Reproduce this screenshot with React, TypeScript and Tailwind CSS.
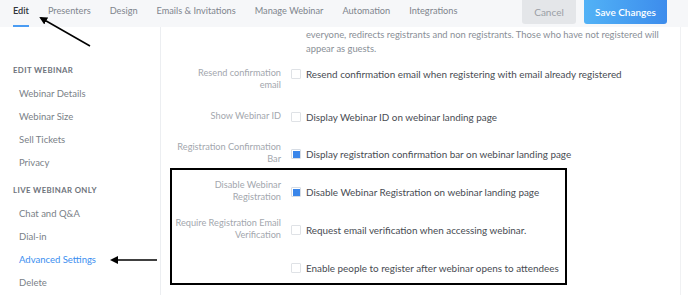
import React from 'react';

const tabs = ['Edit', 'Presenters', 'Design', 'Emails & Invitations', 'Manage Webinar', 'Automation', 'Integrations'];

function Checkbox({ checked }: { checked?: boolean }) {
  if (checked) {
    return (
      <span className="flex h-[10px] w-[10px] shrink-0 items-center justify-center rounded-[1px] border border-[#d6dce4] bg-white">
        <span className="h-[7px] w-[7px] bg-[#3a86ea]" />
      </span>
    );
  }
  return <span className="h-[10px] w-[10px] shrink-0 rounded-[1px] border border-[#dfe2e6] bg-white" />;
}

function Row({
  label,
  text,
  checked,
  dy = 0,
  labelWidth = 111,
  className = '',
}: {
  label?: string[];
  text: string;
  checked?: boolean;
  dy?: number;
  labelWidth?: number;
  className?: string;
}) {
  return (
    <div className={`flex items-start ${className}`}>
      <div
        className="shrink-0 text-right text-[9.2px] leading-[11.5px] text-[#a3a7ae]"
        style={{ width: labelWidth }}
      >
        {label?.map((l) => (
          <div key={l} className="whitespace-nowrap">{l}</div>
        ))}
      </div>
      <div className="ml-[10px] flex h-[14px] items-center gap-[5px]" style={{ marginTop: dy }}>
        <Checkbox checked={checked} />
        <span className="whitespace-nowrap text-[9.9px] leading-[14px] text-[#474b52]">{text}</span>
      </div>
    </div>
  );
}

function SideItem({ children, active }: { children: React.ReactNode; active?: boolean }) {
  return (
    <div className={`h-[23px] pl-[19px] text-[9.5px] leading-[23px] ${active ? 'text-[#3a8ef0]' : 'text-[#7a7f87]'}`}>
      {children}
    </div>
  );
}

export default function App() {
  return (
    <div className="relative h-[295px] w-[688px] overflow-hidden bg-white" style={{ fontFamily: 'Lato, "Noto Sans", sans-serif' }}>
      {/* top bar */}
      <div className="relative z-10 flex h-[27px] items-start bg-[#f6f7f9]">
        <div className="flex gap-[19px] pl-[13px]">
          {tabs.map((t, i) => (
            <div key={t} className="relative h-[27px]">
              <span className={`block whitespace-nowrap pt-[4px] text-[9.2px] leading-[14px] ${i === 0 ? 'font-semibold text-[#30343a]' : 'text-[#80858d]'}`}>
                {t}
              </span>
              {i === 0 && <span className="absolute bottom-0 left-0 h-[2px] w-full bg-[#4a9cf3]" />}
            </div>
          ))}
        </div>
        <div className="ml-auto mr-[21px] flex gap-[8px]">
          <button className="-mt-[6px] h-[30px] w-[54px] rounded-[3px] bg-[#e4e6e9] pt-[6px] text-[10px] text-[#9a9ea5]">
            Cancel
          </button>
          <button className="-mt-[6px] h-[30px] w-[83px] rounded-[3px] bg-gradient-to-r from-[#52b2f6] to-[#3d8cec] pt-[6px] text-[10px] font-semibold text-white">
            Save Changes
          </button>
        </div>
      </div>

      <div className="flex h-[268px]">
        {/* sidebar */}
        <div className="w-[161px] shrink-0 border-r border-[#eceef1]">
          <div className="pl-[13px] pt-[38px] text-[7.8px] font-bold leading-[10px] tracking-[0.05em] text-[#6e737b]">EDIT WEBINAR</div>
          <div className="mt-[7px]">
            <SideItem>Webinar Details</SideItem>
            <SideItem>Webinar Size</SideItem>
            <SideItem>Sell Tickets</SideItem>
            <SideItem>Privacy</SideItem>
          </div>
          <div className="mt-[11px] pl-[13px] text-[7.8px] font-bold leading-[10px] tracking-[0.05em] text-[#6e737b]">LIVE WEBINAR ONLY</div>
          <div className="mt-[7px]">
            <SideItem>Chat and Q&amp;A</SideItem>
            <SideItem>Dial-in</SideItem>
            <SideItem active>Advanced Settings</SideItem>
            <SideItem>Delete</SideItem>
          </div>
        </div>

        {/* content */}
        <div className="w-[520px] shrink-0 border-r border-[#f0f1f3] pl-[9px]">
          <div className="whitespace-nowrap pl-[136px] pt-[1px] text-[9.4px] leading-[14px] text-[#8a8f97]">
            everyone, redirects registrants and non registrants. Those who have not registered will
            <br />
            appear as guests.
          </div>

          <Row className="mt-[11px]" label={['Resend confirmation', 'email']} text="Resend confirmation email when registering with email already registered" />
          <Row className="mt-[20px]" label={['Show Webinar ID']} text="Display Webinar ID on webinar landing page" />
          <Row className="mt-[17px]" label={['Registration Confirmation', 'Bar']} text="Display registration confirmation bar on webinar landing page" checked dy={6} />

          <div className="mt-[4px] w-[397px] border-2 border-black pb-[8px] pt-[9px]">
            <Row labelWidth={109} label={['Disable Webinar', 'Registration']} text="Disable Webinar Registration on webinar landing page" checked dy={6} />
            <Row className="mt-[15px]" labelWidth={109} label={['Require Registration Email', 'Verification']} text="Request email verification when accessing webinar." dy={6} />
            <Row className="mt-[21px]" labelWidth={109} text="Enable people to register after webinar opens to attendees" />
          </div>
        </div>
      </div>

      {/* annotation arrows */}
      <svg className="pointer-events-none absolute left-0 top-0 z-20" width="688" height="295">
        <defs>
          <marker id="ah" markerWidth="8" markerHeight="8" refX="6" refY="4" orient="auto" markerUnits="userSpaceOnUse">
            <path d="M0,0 L8,4 L0,8 Z" fill="#000" />
          </marker>
        </defs>
        <line x1="90" y1="46" x2="41" y2="18" stroke="#000" strokeWidth="1.6" markerEnd="url(#ah)" />
        <line x1="157" y1="260" x2="112" y2="260" stroke="#000" strokeWidth="1.6" markerEnd="url(#ah)" />
      </svg>
    </div>
  );
}
